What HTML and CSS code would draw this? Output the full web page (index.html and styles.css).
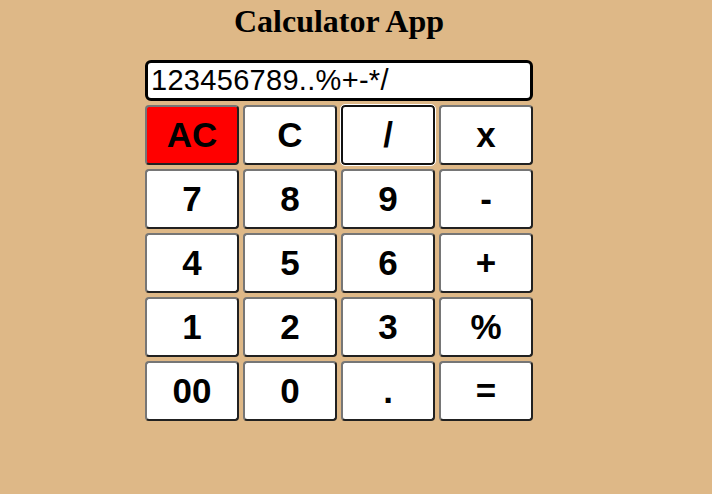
FILE: index.html
```html
<!DOCTYPE html>
<html>
<head>
<meta charset="utf-8">
<link rel="stylesheet" href="styles.css">
</head>
<body>
<div class="app">
  <h1 class="title">Calculator App</h1>
  <input class="display" type="text" value="123456789..%+-*/">
  <div class="keys">
    <button class="key ac">AC</button>
    <button class="key">C</button>
    <button class="key focus">/</button>
    <button class="key">x</button>
    <button class="key">7</button>
    <button class="key">8</button>
    <button class="key">9</button>
    <button class="key">-</button>
    <button class="key">4</button>
    <button class="key">5</button>
    <button class="key">6</button>
    <button class="key">+</button>
    <button class="key">1</button>
    <button class="key">2</button>
    <button class="key">3</button>
    <button class="key">%</button>
    <button class="key">00</button>
    <button class="key">0</button>
    <button class="key">.</button>
    <button class="key">=</button>
  </div>
</div>
</body>
</html>
```
FILE: styles.css
```css
html, body {
  margin: 0;
  padding: 0;
  background: #deb887;
  height: 100%;
}
.app {
  width: 388px;
  margin-left: 145px;
  padding-top: 3px;
  display: flex;
  flex-direction: column;
}
.title {
  margin: 0 0 21px 0;
  font-family: "Liberation Serif", serif;
  font-size: 32px;
  line-height: 36px;
  font-weight: bold;
  text-align: center;
  color: #000;
}
.display {
  box-sizing: border-box;
  width: 388px;
  height: 41px;
  margin: 0 0 4px 0;
  border: 3px solid #000;
  border-radius: 6px;
  padding: 0 3px;
  font-family: "Liberation Sans", Arial, sans-serif;
  font-size: 29px;
  letter-spacing: 0.3px;
  color: #000;
  background: #fff;
  outline: none;
}
.keys {
  display: grid;
  grid-template-columns: repeat(4, 94px);
  grid-auto-rows: 60px;
  gap: 4px;
}
.key {
  box-sizing: border-box;
  margin: 0;
  padding: 0;
  background: #fff;
  border: 2px outset #767676;
  border-radius: 4px;
  font-family: "Liberation Sans", Arial, sans-serif;
  font-size: 35px;
  font-weight: bold;
  color: #000;
}
.key.ac {
  background: #ff0000;
}
.key.focus {
  border: 2px solid #111;
  outline: 1px solid #fff;
}
```
